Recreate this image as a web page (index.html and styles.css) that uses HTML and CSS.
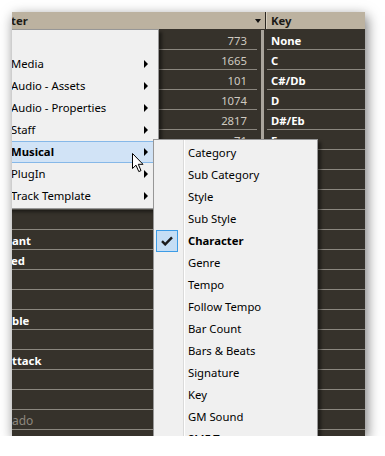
FILE: index.html
```html
<!DOCTYPE html>
<html lang="en">
<head>
    <meta charset="UTF-8">
    <title>MediaBay - Musical</title>
    <link rel="stylesheet" href="styles.css">
</head>
<body>
    <div class="window">
        <div class="header">
            <div class="h-name">ter<span class="sort"></span></div>
            <div class="h-sep"></div>
            <div class="h-key">Key</div>
        </div>
        <div class="rows">
            <div class="row"><div class="cell-a"><span class="name"></span><span class="count">773</span></div><div class="cell-mid top"></div><div class="cell-b">None</div></div>
            <div class="row"><div class="cell-a"><span class="name"></span><span class="count">1665</span></div><div class="cell-mid"></div><div class="cell-b">C</div></div>
            <div class="row"><div class="cell-a"><span class="name"></span><span class="count">101</span></div><div class="cell-mid"></div><div class="cell-b">C#/Db</div></div>
            <div class="row"><div class="cell-a"><span class="name"></span><span class="count">1074</span></div><div class="cell-mid"></div><div class="cell-b">D</div></div>
            <div class="row"><div class="cell-a"><span class="name"></span><span class="count">2817</span></div><div class="cell-mid"></div><div class="cell-b">D#/Eb</div></div>
            <div class="row"><div class="cell-a"><span class="name"></span><span class="count">71</span></div><div class="cell-mid"></div><div class="cell-b">E</div></div>
            <div class="row"><div class="cell-a"><span class="name"></span><span class="count"></span></div><div class="cell-mid"></div><div class="cell-b">F</div></div>
            <div class="row"><div class="cell-a"><span class="name"></span><span class="count"></span></div><div class="cell-mid"></div><div class="cell-b"></div></div>
            <div class="row"><div class="cell-a"><span class="name"></span><span class="count"></span></div><div class="cell-mid"></div><div class="cell-b"></div></div>
            <div class="row"><div class="cell-a"><span class="name"></span><span class="count"></span></div><div class="cell-mid"></div><div class="cell-b"></div></div>
            <div class="row"><div class="cell-a"><span class="name">ant</span><span class="count"></span></div><div class="cell-mid"></div><div class="cell-b"></div></div>
            <div class="row"><div class="cell-a"><span class="name cut">ed</span><span class="count"></span></div><div class="cell-mid"></div><div class="cell-b"></div></div>
            <div class="row"><div class="cell-a"><span class="name"></span><span class="count"></span></div><div class="cell-mid"></div><div class="cell-b"></div></div>
            <div class="row"><div class="cell-a"><span class="name"></span><span class="count"></span></div><div class="cell-mid"></div><div class="cell-b"></div></div>
            <div class="row"><div class="cell-a"><span class="name">ble</span><span class="count"></span></div><div class="cell-mid"></div><div class="cell-b"></div></div>
            <div class="row"><div class="cell-a"><span class="name"></span><span class="count"></span></div><div class="cell-mid"></div><div class="cell-b"></div></div>
            <div class="row"><div class="cell-a"><span class="name">ttack</span><span class="count"></span></div><div class="cell-mid"></div><div class="cell-b"></div></div>
            <div class="row"><div class="cell-a"><span class="name"></span><span class="count"></span></div><div class="cell-mid"></div><div class="cell-b"></div></div>
            <div class="row"><div class="cell-a"><span class="name"></span><span class="count"></span></div><div class="cell-mid"></div><div class="cell-b"></div></div>
            <div class="row"><div class="cell-a"><span class="name dim">ado</span><span class="count"></span></div><div class="cell-mid"></div><div class="cell-b"></div></div>
            <div class="row"><div class="cell-a"><span class="name"></span><span class="count"></span></div><div class="cell-mid"></div><div class="cell-b"></div></div>
        </div>

        <div class="menu">
            <div class="item"><span></span></div>
            <div class="item"><span>Media</span><i class="arrow"></i></div>
            <div class="item"><span>Audio - Assets</span><i class="arrow"></i></div>
            <div class="item"><span>Audio - Properties</span><i class="arrow"></i></div>
            <div class="item"><span>Staff</span><i class="arrow"></i></div>
            <div class="item active"><span>Musical</span><i class="arrow"></i></div>
            <div class="item"><span>PlugIn</span><i class="arrow"></i></div>
            <div class="item"><span>Track Template</span><i class="arrow"></i></div>
        </div>

        <div class="submenu">
            <div class="sub-item"><span class="mark"></span>Category</div>
            <div class="sub-item"><span class="mark"></span>Sub Category</div>
            <div class="sub-item"><span class="mark"></span>Style</div>
            <div class="sub-item"><span class="mark"></span>Sub Style</div>
            <div class="sub-item checked"><span class="mark">
                <svg width="12" height="10" viewBox="0 0 12 10"><path d="M1 5.2 L4.2 8.4 L11 1.4" fill="none" stroke="#1b1b1b" stroke-width="2.4"/></svg>
            </span>Character</div>
            <div class="sub-item"><span class="mark"></span>Genre</div>
            <div class="sub-item"><span class="mark"></span>Tempo</div>
            <div class="sub-item"><span class="mark"></span>Follow Tempo</div>
            <div class="sub-item"><span class="mark"></span>Bar Count</div>
            <div class="sub-item"><span class="mark"></span>Bars &amp; Beats</div>
            <div class="sub-item"><span class="mark"></span>Signature</div>
            <div class="sub-item"><span class="mark"></span>Key</div>
            <div class="sub-item"><span class="mark"></span>GM Sound</div>
            <div class="sub-item"><span class="mark"></span>SMF Type</div>
        </div>

        <svg class="cursor" width="13" height="20" viewBox="0 0 13 20">
            <path d="M0.5 0.5 L0.5 15.5 L4 12.2 L6.8 18.6 L9 17.6 L6.3 11.3 L11 11.3 Z" fill="#fff" stroke="#000" stroke-width="1" stroke-linejoin="round"/>
        </svg>
    </div>
</body>
</html>
```

FILE: styles.css
```css
body {
    margin: 0;
    background-color: #fff;
    font-family: "Noto Sans", "Liberation Sans", sans-serif;
    font-size: 11.3px;
}
.window {
    position: relative;
    margin: 12px 0 0 12px;
    width: 353px;
    height: 424px;
    overflow: hidden;
    background-color: #36322b;
    box-shadow: 2px 4px 12px rgba(0,0,0,0.55);
}
.header {
    display: flex;
    height: 17px;
    background-color: #bcb2a0;
    margin-bottom: 1px;
    font-weight: bold;
    color: #1c1a16;
    line-height: 17px;
}
.h-name {
    flex: 1;
    display: flex;
    justify-content: space-between;
    align-items: center;
    margin-left: -1px;
}
.sort {
    width: 0;
    height: 0;
    border-left: 3px solid transparent;
    border-right: 3px solid transparent;
    border-top: 4px solid #111;
    margin-right: 4px;
}
.h-sep {
    width: 1px;
    background-color: #2c2822;
    border-right: 1px solid #d8d0c0;
}
.h-key {
    width: 94px;
    padding-left: 4px;
}
.row {
    display: grid;
    grid-template-columns: 245px 10px 98px;
    height: 20px;
}
.cell-a, .cell-b {
    box-sizing: border-box;
    height: 20px;
    border-bottom: 1px solid #8b877f;
    line-height: 21px;
}
.cell-a {
    display: flex;
    justify-content: space-between;
    padding-right: 10px;
}
.cell-b {
    padding-left: 4px;
    color: #fff;
    font-weight: bold;
}
.cell-mid {
    background: linear-gradient(to right, transparent 4px, #aaa59c 4px, #aaa59c 7px, transparent 7px);
}
.cell-mid.top {
    border-radius: 2px 2px 0 0;
}
.name {
    color: #fff;
    font-weight: bold;
}
.name.cut {
    margin-left: -1px;
}
.name.dim {
    color: #8c877e;
    font-weight: normal;
    font-size: 12px;
}
.count {
    color: #cfcac1;
}
.menu {
    position: absolute;
    left: -10px;
    top: 17px;
    width: 157px;
    box-sizing: border-box;
    padding: 1px 0 1px;
    background-color: #f0f0f0;
    border: 1px solid #979797;
    box-shadow: 3px 3px 3px rgba(0,0,0,0.45);
    color: #000;
}
.item {
    display: flex;
    justify-content: space-between;
    align-items: center;
    box-sizing: border-box;
    height: 22px;
    margin: 0 3px 0 2px;
    padding: 0 6px 1px 5px;
    border: 1px solid transparent;
}
.item.active {
    background-color: #d1e3f6;
    border-color: #86b8e8;
    font-weight: bold;
}
.arrow {
    width: 0;
    height: 0;
    border-top: 4px solid transparent;
    border-bottom: 4px solid transparent;
    border-left: 4px solid #000;
}
.submenu {
    position: absolute;
    left: 141px;
    top: 127px;
    width: 165px;
    box-sizing: border-box;
    padding: 2px 0;
    border: 1px solid #979797;
    background: linear-gradient(to right, #f0f0f0 29px, #dadada 29px, #dadada 30px, #fff 30px, #fff 31px, #f0f0f0 31px);
    box-shadow: 3px 3px 3px rgba(0,0,0,0.45);
    color: #000;
}
.sub-item {
    display: flex;
    align-items: center;
    box-sizing: border-box;
    height: 22px;
    padding-bottom: 2px;
}
.mark {
    display: flex;
    align-items: center;
    justify-content: center;
    box-sizing: border-box;
    width: 22px;
    height: 22px;
    margin: 2px 10px 0 2px;
}
.checked {
    font-weight: bold;
}
.checked .mark {
    background-color: #c5def5;
    border: 1px solid #3d9ce6;
}
.cursor {
    position: absolute;
    left: 120px;
    top: 141px;
}
```
